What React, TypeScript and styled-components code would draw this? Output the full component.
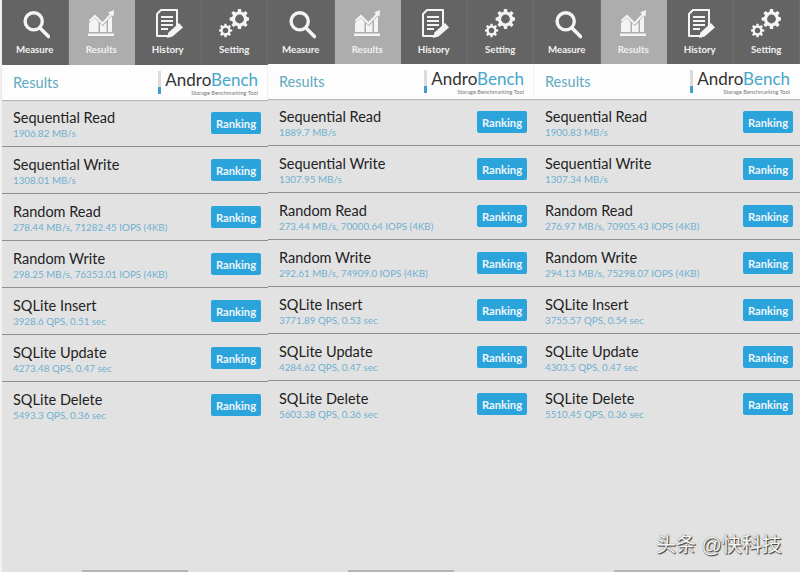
import React from 'react'
import styled, { createGlobalStyle } from 'styled-components'

const GlobalStyle = createGlobalStyle`
  html, body {
    margin: 0;
    padding: 0;
    background: #f2f2f2;
  }
`

const Page = styled.div`
  position: relative;
  display: flex;
  width: 800px;
  height: 572px;
  padding-left: 2px;
  box-sizing: border-box;
  overflow: hidden;
  font-family: Lato, 'Noto Sans', sans-serif;
`

const Column = styled.div`
  position: relative;
  display: flex;
  flex-direction: column;
  width: 266px;
  height: 572px;
  background: #e2e2e2;
`

const TabBar = styled.div<{ $height: number }>`
  display: grid;
  grid-template-columns: repeat(4, 1fr);
  height: ${(p) => p.$height}px;
  background: #646464;
`

const Tab = styled.div<{ $active?: boolean }>`
  display: flex;
  flex-direction: column;
  align-items: center;
  padding-top: 9px;
  box-sizing: border-box;
  background: ${(p) => (p.$active ? '#adadad' : '#646464')};
  border-right: 1px solid ${(p) => (p.$active ? '#adadad' : '#6e6e6e')};
  color: #f1f1f1;
  font-size: 9.7px;
  font-weight: 700;
  line-height: 12px;
  svg {
    display: block;
    width: 30px;
    height: 30px;
    margin-bottom: 4px;
  }
`

const Header = styled.div`
  display: flex;
  align-items: center;
  justify-content: space-between;
  height: 35px;
  padding: 0 10px 0 11px;
  box-sizing: border-box;
  background: #fdfdfd;
  box-shadow: 0 1px 1px #b8b8b8;
`

const HeaderTitle = styled.div`
  color: #5fa9c0;
  font-size: 14.5px;
`

const Logo = styled.div`
  display: flex;
  gap: 4px;
  height: 24px;
`

const LogoBar = styled.div`
  width: 3px;
  height: 23px;
  background: linear-gradient(#dcdcdc 70%, #3d9fcd 70%);
`

const LogoText = styled.div`
  display: flex;
  flex-direction: column;
  align-items: flex-end;
`

const LogoName = styled.div`
  font-size: 17px;
  line-height: 17px;
  color: #45a7c9;
  b {
    font-weight: 400;
    color: #333;
  }
`

const LogoTag = styled.div`
  margin-top: 2px;
  font-size: 5.6px;
  line-height: 6px;
  color: #777;
`

const Row = styled.div<{ $last?: boolean }>`
  display: flex;
  align-items: center;
  justify-content: space-between;
  height: 47px;
  padding: 0 7px 0 11px;
  box-sizing: border-box;
  border-bottom: 1px solid ${(p) => (p.$last ? 'transparent' : '#8f8f8f')};
`

const RowText = styled.div`
  display: flex;
  flex-direction: column;
  padding-top: 2px;
`

const RowName = styled.div`
  color: #222;
  font-size: 14.5px;
  line-height: 18px;
`

const RowValue = styled.div`
  color: #6fb0d0;
  font-size: 9.8px;
  line-height: 12px;
`

const RankingButton = styled.div`
  display: flex;
  align-items: center;
  justify-content: center;
  width: 50px;
  height: 22px;
  border-radius: 2px;
  background: #2ba4dc;
  color: #f0f6fa;
  font-size: 11.2px;
  font-weight: 700;
`

const ScrollThumb = styled.div`
  position: absolute;
  left: 80px;
  bottom: 0;
  width: 106px;
  height: 2px;
  background: #b4b4b4;
`

const Watermark = styled.div`
  position: absolute;
  left: 656px;
  top: 533px;
  color: #f5f5f5;
  font-family: 'Liberation Sans', 'Noto Sans CJK SC', sans-serif;
  font-size: 20px;
  line-height: 24px;
  white-space: nowrap;
  text-shadow: 1px 1px 1px #333, 0 0 1px #555;
`

const MeasureIcon = () => (
  <svg viewBox="0 0 30 30" fill="none" stroke="#f4f4f4">
    <circle cx="13.7" cy="12.3" r="8.6" strokeWidth="3.4" />
    <path d="M20.5 19.5 L28.5 27.5" strokeWidth="3.6" strokeLinecap="round" />
  </svg>
)

const ResultsIcon = () => (
  <svg viewBox="0 0 30 30" fill="#f4f4f4">
    <path d="M3 23 V14 L9 9 L12.5 13 V23 Z M14 23 V14.5 L17 17 L20.5 13 V23 Z M22 23 V11 L26 7 V23 Z" />
    <path d="M3 11 L9 5.5 L16.5 13 L24 5 L22 3.5 L28 1 L27.5 7.5 L25.5 6.5 L16.5 16 L9 8.5 L4 13 Z" />
    <rect x="2" y="24.5" width="26" height="2.5" />
  </svg>
)

const HistoryIcon = () => (
  <svg viewBox="0 0 30 30">
    <path
      d="M8 1 H24 V18 L17 27 H4 V5 Z"
      fill="#646464"
      stroke="#f4f4f4"
      strokeWidth="2"
      strokeLinejoin="round"
    />
    <path
      d="M8 8 H20 M8 12 H20 M8 16 H20 M8 20 H15"
      stroke="#f4f4f4"
      strokeWidth="1.9"
    />
    <path d="M14 29 L15.5 23.5 L26 14 L30 18.5 L19.5 27.5 Z" fill="#f4f4f4" />
  </svg>
)

const gearPath = (cx: number, cy: number, outer: number, inner: number, hole: number, teeth: number) => {
  const pts: string[] = []
  const step = (Math.PI * 2) / teeth
  for (let i = 0; i < teeth; i++) {
    const a = i * step
    const corners: [number, number][] = [
      [inner, a - step * 0.32],
      [outer, a - step * 0.2],
      [outer, a + step * 0.2],
      [inner, a + step * 0.32],
    ]
    corners.forEach(([r, t]) => {
      pts.push(`${(cx + r * Math.cos(t)).toFixed(2)} ${(cy + r * Math.sin(t)).toFixed(2)}`)
    })
  }
  const ring = `M${cx - hole} ${cy} a${hole} ${hole} 0 1 0 ${hole * 2} 0 a${hole} ${hole} 0 1 0 ${-hole * 2} 0 Z`
  return `M${pts.join(' L')} Z ${ring}`
}

const SettingIcon = () => (
  <svg viewBox="0 0 30 30" fill="#f4f4f4">
    <path fillRule="evenodd" d={gearPath(20.5, 10, 10, 7.6, 4.4, 8)} />
    <path fillRule="evenodd" d={gearPath(6.5, 21.5, 6.8, 5.1, 2.7, 8)} />
  </svg>
)

const tabs = [
  { label: 'Measure', icon: <MeasureIcon /> },
  { label: 'Results', icon: <ResultsIcon />, active: true },
  { label: 'History', icon: <HistoryIcon /> },
  { label: 'Setting', icon: <SettingIcon /> },
]

const names = [
  'Sequential Read',
  'Sequential Write',
  'Random Read',
  'Random Write',
  'SQLite Insert',
  'SQLite Update',
  'SQLite Delete',
]

const columns = [
  {
    barHeight: 65,
    values: [
      '1906.82 MB/s',
      '1308.01 MB/s',
      '278.44 MB/s, 71282.45 IOPS (4KB)',
      '298.25 MB/s, 76353.01 IOPS (4KB)',
      '3928.6 QPS, 0.51 sec',
      '4273.48 QPS, 0.47 sec',
      '5493.3 QPS, 0.36 sec',
    ],
  },
  {
    barHeight: 64,
    values: [
      '1889.7 MB/s',
      '1307.95 MB/s',
      '273.44 MB/s, 70000.64 IOPS (4KB)',
      '292.61 MB/s, 74909.0 IOPS (4KB)',
      '3771.89 QPS, 0.53 sec',
      '4284.62 QPS, 0.47 sec',
      '5603.38 QPS, 0.36 sec',
    ],
  },
  {
    barHeight: 64,
    values: [
      '1900.83 MB/s',
      '1307.34 MB/s',
      '276.97 MB/s, 70905.43 IOPS (4KB)',
      '294.13 MB/s, 75298.07 IOPS (4KB)',
      '3755.57 QPS, 0.54 sec',
      '4303.5 QPS, 0.47 sec',
      '5510.45 QPS, 0.36 sec',
    ],
  },
]

function App() {
  return (
    <>
      <GlobalStyle />
      <Page>
        {columns.map((col, c) => (
          <Column key={c}>
            <TabBar $height={col.barHeight}>
              {tabs.map((t) => (
                <Tab key={t.label} $active={t.active}>
                  {t.icon}
                  {t.label}
                </Tab>
              ))}
            </TabBar>
            <Header>
              <HeaderTitle>Results</HeaderTitle>
              <Logo>
                <LogoBar />
                <LogoText>
                  <LogoName>
                    <b>Andro</b>Bench
                  </LogoName>
                  <LogoTag>Storage Benchmarking Tool</LogoTag>
                </LogoText>
              </Logo>
            </Header>
            {names.map((name, i) => (
              <Row key={name} $last={i === names.length - 1}>
                <RowText>
                  <RowName>{name}</RowName>
                  <RowValue>{col.values[i]}</RowValue>
                </RowText>
                <RankingButton>Ranking</RankingButton>
              </Row>
            ))}
            <ScrollThumb />
          </Column>
        ))}
        <Watermark>头条 @快科技</Watermark>
      </Page>
    </>
  )
}

export default App
